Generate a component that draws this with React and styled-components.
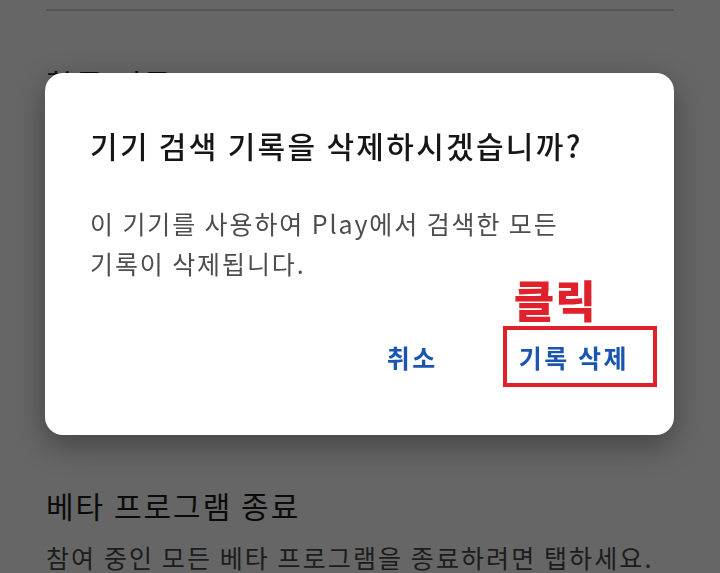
import React from 'react';
import styled, { createGlobalStyle } from 'styled-components';

const GlobalStyle = createGlobalStyle`
  html, body {
    margin: 0;
    padding: 0;
    background: #ffffff;
  }
  body {
    font-family: "Noto Sans CJK KR", "Noto Sans", sans-serif;
    overflow: hidden;
  }
`;

const Page = styled.div`
  width: 720px;
  height: 573px;
  padding: 0 46px;
  box-sizing: border-box;
  background: #ffffff;
`;

const Divider = styled.div`
  height: 2px;
  margin-top: 9px;
  background: #d4d4d4;
`;

const Section = styled.section`
  padding-top: ${p => p.$top}px;
`;

const SectionTitle = styled.h2`
  margin: 0;
  font-size: 30px;
  font-weight: 400;
  letter-spacing: 2px;
  line-height: 40px;
  color: #1c1c1c;
`;

const SectionText = styled.p`
  margin: 16px 0 0;
  font-size: 25px;
  letter-spacing: 2.1px;
  line-height: 32px;
  color: #4a4a4a;
  white-space: nowrap;
`;

const Scrim = styled.div`
  position: fixed;
  inset: 0;
  background: rgba(0, 0, 0, 0.6);
`;

const Dialog = styled.div`
  position: fixed;
  left: 45px;
  top: 73px;
  width: 629px;
  height: 362px;
  box-sizing: border-box;
  padding: 52px 45px 0;
  background: #ffffff;
  border-radius: 18px;
  box-shadow: 0 10px 30px rgba(0, 0, 0, 0.35);
  display: flex;
  flex-direction: column;
`;

const DialogTitle = styled.h1`
  margin: 0;
  font-size: 30px;
  font-weight: 500;
  letter-spacing: 2.3px;
  line-height: 40px;
  color: #161616;
  white-space: nowrap;
`;

const DialogBody = styled.p`
  margin: 38px 0 0;
  font-size: 25px;
  letter-spacing: 1.9px;
  line-height: 40px;
  color: #4d4d4d;
`;

const Actions = styled.div`
  margin-top: 43px;
  display: flex;
  justify-content: flex-end;
  align-items: center;
  gap: 65px;
`;

const ActionButton = styled.button`
  border: none;
  background: none;
  padding: 0;
  font-family: inherit;
  font-size: 25px;
  font-weight: 700;
  letter-spacing: 2.5px;
  line-height: 36px;
  color: #1a56b0;
  cursor: pointer;
`;

const Highlight = styled.div`
  position: relative;
  display: flex;
  border: 4px solid #e0202a;
  padding: 8.5px 24px 8.5px 12px;
  margin-right: -28px;
`;

const ClickLabel = styled.span`
  position: absolute;
  left: 7px;
  bottom: 100%;
  margin-bottom: 6px;
  font-size: 44px;
  font-weight: 900;
  letter-spacing: 1px;
  line-height: 50px;
  color: #e0202a;
  white-space: nowrap;
`;

export default function App() {
  return (
    <>
      <GlobalStyle />
      <Page>
        <Divider />
        <Section $top={52}>
          <SectionTitle>활동 기록</SectionTitle>
        </Section>
        <Section $top={382}>
          <SectionTitle>베타 프로그램 종료</SectionTitle>
          <SectionText>참여 중인 모든 베타 프로그램을 종료하려면 탭하세요.</SectionText>
        </Section>
      </Page>
      <Scrim />
      <Dialog role="dialog">
        <DialogTitle>기기 검색 기록을 삭제하시겠습니까?</DialogTitle>
        <DialogBody>
          이 기기를 사용하여 Play에서 검색한 모든
          <br />
          기록이 삭제됩니다.
        </DialogBody>
        <Actions>
          <ActionButton>취소</ActionButton>
          <Highlight>
            <ClickLabel>클릭</ClickLabel>
            <ActionButton>기록 삭제</ActionButton>
          </Highlight>
        </Actions>
      </Dialog>
    </>
  );
}
